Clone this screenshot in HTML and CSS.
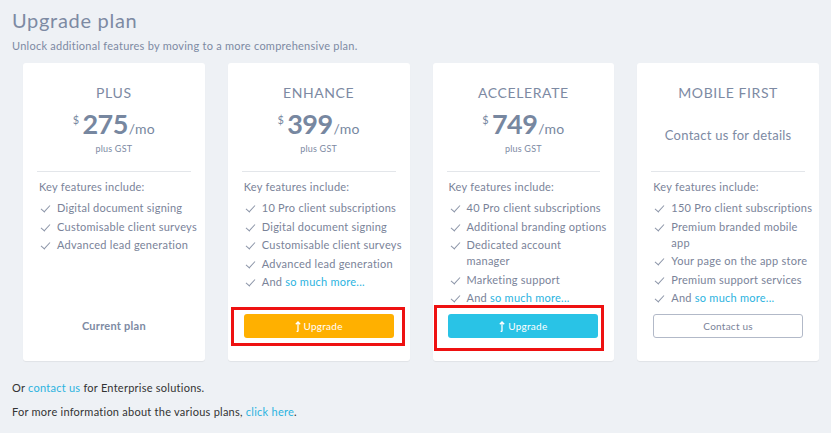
FILE: index.html
```html
<!DOCTYPE html>
<html lang="en">
<head>
  <meta charset="UTF-8">
  <title>Upgrade plan</title>
  <link rel="stylesheet" href="styles.css">
</head>
<body>
<div class="page">
  <h1 class="title">Upgrade plan</h1>
  <p class="intro">Unlock additional features by moving to a more comprehensive plan.</p>

  <div class="plans">
    <div class="plan">
      <div class="plan-name">PLUS</div>
      <div class="price"><span class="cur">$</span><span class="amt">275</span><span class="per">/mo</span></div>
      <div class="gst">plus GST</div>
      <div class="feats">
        <div class="feats-head">Key features include:</div>
        <ul class="list">
          <li>Digital document signing</li>
          <li>Customisable client surveys</li>
          <li>Advanced lead generation</li>
        </ul>
      </div>
      <div class="action"><span class="current">Current plan</span></div>
    </div>

    <div class="plan">
      <div class="plan-name">ENHANCE</div>
      <div class="price"><span class="cur">$</span><span class="amt">399</span><span class="per">/mo</span></div>
      <div class="gst">plus GST</div>
      <div class="feats">
        <div class="feats-head">Key features include:</div>
        <ul class="list">
          <li>10 Pro client subscriptions</li>
          <li>Digital document signing</li>
          <li>Customisable client surveys</li>
          <li>Advanced lead generation</li>
          <li>And <a href="#">so much more...</a></li>
        </ul>
      </div>
      <div class="action">
        <span class="mark mark-a"><a class="btn btn-orange" href="#"><svg class="up" width="6" height="11" viewBox="0 0 6 11"><path d="M3 10.5V1M0.8 3.2L3 1l2.2 2.2M3 10.5H1.6" fill="none" stroke="#fff" stroke-width="1.3"/></svg>Upgrade</a></span>
      </div>
    </div>

    <div class="plan">
      <div class="plan-name">ACCELERATE</div>
      <div class="price"><span class="cur">$</span><span class="amt">749</span><span class="per">/mo</span></div>
      <div class="gst">plus GST</div>
      <div class="feats">
        <div class="feats-head">Key features include:</div>
        <ul class="list">
          <li>40 Pro client subscriptions</li>
          <li>Additional branding options</li>
          <li>Dedicated account<br>manager</li>
          <li>Marketing support</li>
          <li>And <a href="#">so much more...</a></li>
        </ul>
      </div>
      <div class="action">
        <span class="mark mark-b"><a class="btn btn-blue" href="#"><svg class="up" width="6" height="11" viewBox="0 0 6 11"><path d="M3 10.5V1M0.8 3.2L3 1l2.2 2.2M3 10.5H1.6" fill="none" stroke="#fff" stroke-width="1.3"/></svg>Upgrade</a></span>
      </div>
    </div>

    <div class="plan">
      <div class="plan-name">MOBILE FIRST</div>
      <div class="contact-note">Contact us for details</div>
      <div class="feats">
        <div class="feats-head">Key features include:</div>
        <ul class="list">
          <li>150 Pro client subscriptions</li>
          <li>Premium branded mobile<br>app</li>
          <li>Your page on the app store</li>
          <li>Premium support services</li>
          <li>And <a href="#">so much more...</a></li>
        </ul>
      </div>
      <div class="action"><a class="btn btn-line" href="#">Contact us</a></div>
    </div>
  </div>

  <p class="foot">Or <a href="#">contact us</a> for Enterprise solutions.</p>
  <p class="foot">For more information about the various plans, <a href="#">click here</a>.</p>
</div>
</body>
</html>
```

FILE: styles.css
```css
body,div,ul,li,p,h1{margin:0;padding:0;}
ul{list-style-type:none;}
body{background:#eef1f5;font:11px/16px "Lato","Open Sans",sans-serif;color:#7a8399;letter-spacing:0.25px;}
a{color:#2bb3e0;text-decoration:none;}

.page{padding:7px 12px 0;}
.title{font-size:20px;line-height:26px;font-weight:400;color:#7d8aa3;letter-spacing:0.7px;}
.intro{margin-top:5px;color:#7d8aa3;font-size:11px;line-height:16px;}

.plans{display:flex;gap:23px;margin:9px 0 0 11px;}
.plan{width:182px;height:298px;box-sizing:border-box;background:#fff;border-radius:3px;box-shadow:0 1px 1px rgba(0,0,0,0.06);padding:20px 14px 23px;display:flex;flex-direction:column;text-align:center;}
.plan-name{font-size:14px;line-height:20px;color:#7d8aa3;letter-spacing:0.6px;}
.price{margin-top:7px;height:28px;display:flex;justify-content:center;align-items:baseline;color:#7787a0;}
.price .cur{font-size:11px;align-self:flex-start;margin:2px 3px 0 0;}
.price .amt{font-size:27px;line-height:28px;font-weight:700;letter-spacing:-0.5px;}
.price .per{font-size:14px;margin-left:1px;}
.gst{font-size:9px;line-height:12px;margin-top:5px;color:#7d8aa3;letter-spacing:0.2px;}
.contact-note{margin-top:23px;height:29px;font-size:13px;line-height:18px;color:#7d8aa3;}

.feats{margin-top:16px;padding:7px 0 0 2px;margin-right:-9px;text-align:left;border-top:1px solid;border-image:linear-gradient(to right,#e3e6ea calc(100% - 9px),transparent calc(100% - 9px)) 1 0 0 0;}
.list{margin-top:5px;}
.list li{position:relative;padding-left:18px;line-height:16px;margin-bottom:2.6px;white-space:nowrap;}
.list li:before{content:"";position:absolute;left:4px;top:3px;width:4px;height:8px;border:solid #8c95a8;border-width:0 1.4px 1.4px 0;transform:rotate(42deg);}

.action{margin-top:auto;display:flex;justify-content:center;}
.current{font-weight:700;color:#7d8aa3;line-height:24px;}
.btn{display:flex;align-items:center;justify-content:center;gap:3px;width:150px;height:24px;box-sizing:border-box;border-radius:3px;color:#fff;font-size:10px;}
.btn-orange{background:#ffb000;}
.btn-blue{background:#29c3e6;}
.btn-line{background:#fff;border:1px solid #b2b9c8;color:#7a8399;}
.up{display:block;}

/* red highlight frames */
.mark{display:block;border:3px solid #ee1111;}
.mark-a{padding:4px 8px 5px 10px;margin:-7px -11px -8px -13px;}
.mark-b{padding:6px 3px 10px 11px;margin:-9px -6px -13px -14px;}

.foot{color:#333;margin-top:8px;line-height:16px;}
.plans + .foot{margin-top:19px;}
```
